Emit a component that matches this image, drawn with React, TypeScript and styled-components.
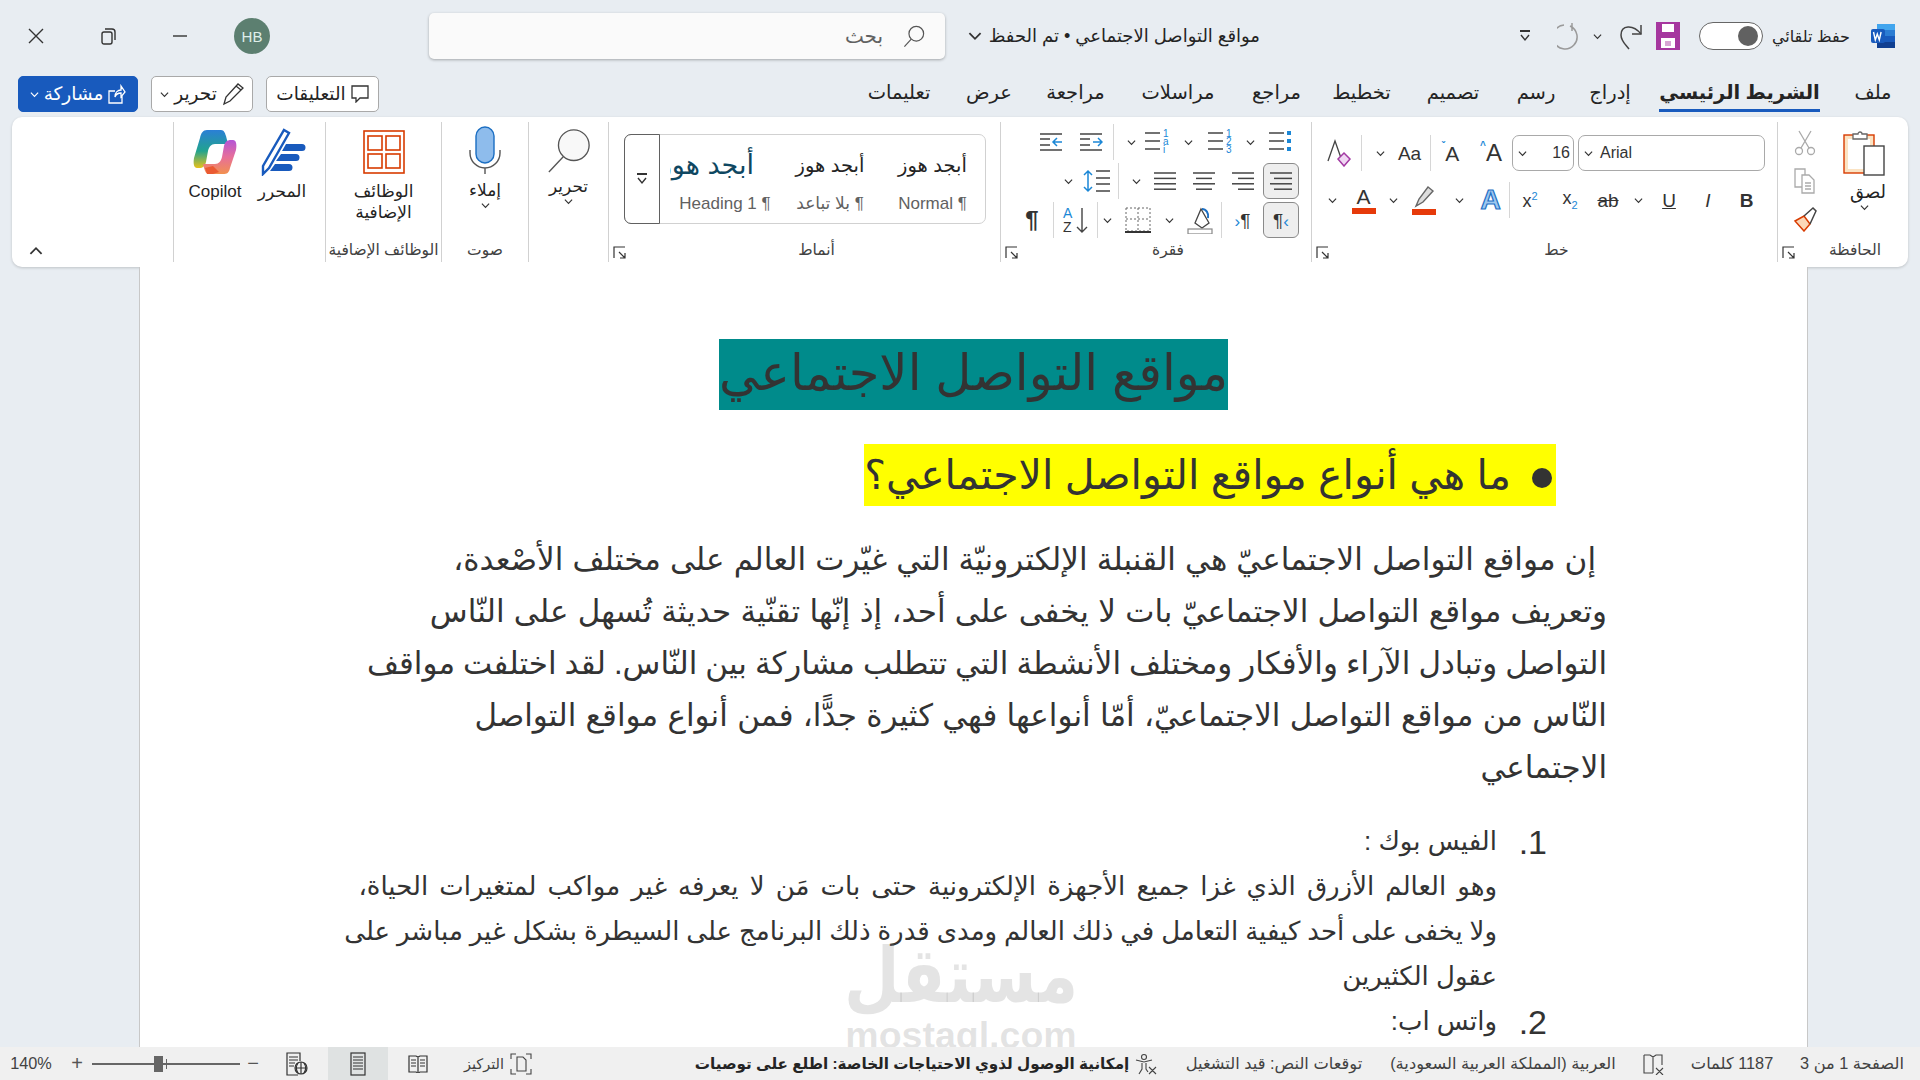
import React from 'react';
import styled, { createGlobalStyle } from 'styled-components';

const GlobalStyle = createGlobalStyle`
  html, body { margin: 0; height: 100%; overflow: hidden; background: #e8edf2; }
  body { font-family: "Liberation Sans", "DejaVu Sans", sans-serif; color: #242424; }
  button { font: inherit; color: inherit; padding: 0; border: 0; background: none; }
  svg { display: block; direction: ltr; }
`;

const Root = styled.div`
  width: 1920px;
  height: 1080px;
  display: flex;
  flex-direction: column;
  background: #e8edf2;
  overflow: hidden;
`;

const TitleBar = styled.div`
  height: 72px;
  flex: none;
  display: flex;
  align-items: center;
  padding-right: 24px;
`;

const Slot = styled.div<{ $w: number; $mr?: number }>`
  width: ${(p) => p.$w}px;
  margin-right: ${(p) => p.$mr || 0}px;
  flex: none;
  display: flex;
  align-items: center;
  justify-content: center;
`;

const AutoSaveLabel = styled(Slot)`
  justify-content: flex-start;
  padding-right: 20px;
  box-sizing: border-box;
  font-size: 16px;
  white-space: nowrap;
`;

const Toggle = styled.div`
  width: 64px;
  height: 28px;
  box-sizing: border-box;
  flex: none;
  border: 1px solid #666;
  border-radius: 14px;
  background: #fff;
  display: flex;
  align-items: center;
  justify-content: flex-start;
  padding: 0 4px;
`;

const ToggleKnob = styled.div`
  width: 20px;
  height: 20px;
  border-radius: 50%;
  background: #616161;
`;

const DocTitle = styled.div`
  width: 300px;
  margin-right: 240px;
  flex: none;
  display: flex;
  align-items: center;
  gap: 7px;
  font-size: 18px;
  white-space: nowrap;
`;

const SearchBox = styled.div`
  width: 516px;
  height: 46px;
  margin-right: 15px;
  flex: none;
  box-sizing: border-box;
  display: flex;
  align-items: center;
  gap: 20px;
  padding-right: 20px;
  background: #fafafa;
  border-radius: 5px;
  box-shadow: 0 1px 3px rgba(0, 0, 0, 0.3);
  font-size: 20px;
  color: #616161;
`;

const Avatar = styled.div`
  width: 36px;
  height: 36px;
  margin-right: 159px;
  flex: none;
  border-radius: 50%;
  background: #5c7f70;
  color: #dfeeea;
  font-size: 15px;
  display: flex;
  align-items: center;
  justify-content: center;
`;

const WindowControls = styled.div`
  margin-right: 18px;
  display: flex;
`;

const WindowButton = styled.button`
  width: 72px;
  height: 72px;
  display: flex;
  align-items: center;
  justify-content: center;
`;

const TabsRow = styled.div`
  height: 36px;
  margin-top: 4px;
  flex: none;
  display: flex;
  align-items: center;
  padding: 0 30px 0 18px;
`;

const Tab = styled.div<{ $w: number; $active?: boolean }>`
  width: ${(p) => p.$w}px;
  height: 36px;
  flex: none;
  box-sizing: border-box;
  display: flex;
  align-items: center;
  justify-content: center;
  white-space: nowrap;
  font-size: 19.5px;
  font-weight: ${(p) => (p.$active ? 700 : 400)};
  border-bottom: 3px solid ${(p) => (p.$active ? '#185abd' : 'transparent')};
`;

const TabGap = styled.div<{ $w: number }>`
  width: ${(p) => p.$w}px;
  flex: none;
`;

const TabActions = styled.div`
  margin-right: auto;
  display: flex;
  gap: 13px;
`;

const ActionButton = styled.button<{ $w: number; $primary?: boolean }>`
  width: ${(p) => p.$w}px;
  height: 36px;
  box-sizing: border-box;
  display: flex;
  align-items: center;
  justify-content: center;
  gap: 5px;
  border-radius: 5px;
  font-size: 18.5px;
  white-space: nowrap;
  background: ${(p) => (p.$primary ? '#185abd' : '#fff')};
  color: ${(p) => (p.$primary ? '#fff' : '#242424')};
  border: 1px solid ${(p) => (p.$primary ? '#185abd' : '#a9a9a9')};
`;

const Ribbon = styled.div`
  height: 150px;
  margin: 5px 12px 0;
  flex: none;
  display: flex;
  background: #fff;
  border-radius: 10px;
  box-shadow: 0 1px 3px rgba(0, 0, 0, 0.18);
  position: relative;
`;

const Group = styled.div<{ $w: number; $last?: boolean }>`
  width: ${(p) => p.$w}px;
  flex: none;
  box-sizing: border-box;
  margin: 5px 0;
  position: relative;
  border-left: ${(p) => (p.$last ? 'none' : '1px solid #d1d1d1')};
  display: flex;
  flex-direction: column;
`;

const GroupBody = styled.div`
  flex: 1;
  display: flex;
  min-height: 0;
`;

const GroupLabel = styled.div<{ $launcher?: boolean }>`
  height: 22px;
  margin-bottom: 1px;
  padding-left: ${(p) => (p.$launcher ? 24 : 0)}px;
  flex: none;
  text-align: center;
  font-size: 15.5px;
  line-height: 22px;
  color: #424242;
  white-space: nowrap;
`;

const Launcher = styled.div`
  position: absolute;
  left: 4px;
  bottom: 3px;
`;

const LargeTool = styled.div<{ $w: number; $top?: number }>`
  width: ${(p) => p.$w}px;
  flex: none;
  display: flex;
  flex-direction: column;
  align-items: center;
  padding-top: ${(p) => p.$top ?? 6}px;
  font-size: 17px;
  line-height: 21px;
  text-align: center;
  white-space: nowrap;
`;

const LargeLabel = styled.div<{ $mt?: number }>`
  margin-top: ${(p) => p.$mt ?? 6}px;
`;

const PasteLabel = styled(LargeLabel)`
  margin-left: 8px;
  font-size: 18px;
`;

const SmallColumn = styled.div`
  width: 30px;
  flex: none;
  display: flex;
  flex-direction: column;
  align-items: center;
  gap: 12px;
  padding-top: 8px;
`;

const ToolRows = styled.div<{ $gap: number; $top: number; $pr: number }>`
  display: flex;
  flex-direction: column;
  gap: ${(p) => p.$gap}px;
  padding: ${(p) => p.$top}px ${(p) => p.$pr}px 0 0;
`;

const ToolRow = styled.div<{ $h: number }>`
  height: ${(p) => p.$h}px;
  display: flex;
  align-items: center;
`;

const Tool = styled.button<{ $w: number; $selected?: boolean }>`
  width: ${(p) => p.$w}px;
  height: 36px;
  flex: none;
  box-sizing: border-box;
  display: flex;
  align-items: center;
  justify-content: center;
  border-radius: 6px;
  background: ${(p) => (p.$selected ? '#eeeeee' : 'transparent')};
  border: 1px solid ${(p) => (p.$selected ? '#8a8a8a' : 'transparent')};
`;

const ToolDivider = styled.div<{ $before?: number }>`
  width: 1px;
  height: 36px;
  margin-right: ${(p) => p.$before || 0}px;
  flex: none;
  background: #d6d6d6;
`;

const FieldBox = styled.div<{ $w: number; $mr?: number; $apart?: boolean }>`
  width: ${(p) => p.$w}px;
  height: 36px;
  margin-left: ${(p) => p.$mr || 0}px;
  flex: none;
  box-sizing: border-box;
  border: 1px solid #a9a9a9;
  border-radius: 7px;
  display: flex;
  align-items: center;
  justify-content: ${(p) => (p.$apart ? 'space-between' : 'flex-start')};
  gap: 7px;
  padding: 0 3px 0 5px;
  font-size: 16px;
`;

const Gallery = styled.div`
  width: 362px;
  height: 90px;
  margin: 12px 14px 0 0;
  flex: none;
  box-sizing: border-box;
  display: flex;
  border: 1px solid #d1d1d1;
  border-radius: 7px;
`;

const StyleItem = styled.div<{ $w: number }>`
  width: ${(p) => p.$w}px;
  flex: none;
  display: flex;
  flex-direction: column;
  align-items: center;
  white-space: nowrap;
`;

const StylePreview = styled.div`
  height: 46px;
  margin-top: 7px;
  font-size: 19.5px;
  line-height: 46px;
  color: #242424;
`;

const HeadingPreview = styled(StylePreview)`
  width: 100%;
  padding-right: 26px;
  box-sizing: border-box;
  overflow: hidden;
  font-size: 27px;
  color: #0f4761;
`;

const StyleName = styled.div`
  margin-top: 4px;
  font-size: 17px;
  color: #616161;
  line-height: 24px;
`;

const GalleryScroll = styled.div`
  width: 36px;
  flex: none;
  box-sizing: border-box;
  border: 1px solid #616161;
  border-top-left-radius: 7px;
  border-bottom-left-radius: 7px;
  margin: -1px auto -1px -1px;
  display: flex;
  align-items: center;
  justify-content: center;
`;

const Collapse = styled.button`
  position: absolute;
  left: 14px;
  bottom: 6px;
  width: 20px;
  height: 20px;
  display: flex;
  align-items: center;
  justify-content: center;
`;

const DocArea = styled.div`
  flex: 1;
  min-height: 0;
  display: flex;
  justify-content: center;
  margin-right: 112px;
  margin-left: 139px;
`;

const Page = styled.div`
  flex: 1;
  position: relative;
  overflow: hidden;
  background: #fff;
  border-left: 1px solid #c8c8c8;
  border-right: 1px solid #c8c8c8;
  color: #333;
  padding-top: 72px;
`;

const TitleBlock = styled.div`
  display: flex;
  justify-content: center;
`;

const TitleText = styled.span`
  height: 71px;
  line-height: 68px;
  background: #008b8b;
  font-size: 49.6px;
  white-space: nowrap;
`;

const HeadingRow = styled.div`
  margin-top: 34px;
  margin-right: 251px;
  display: flex;
  justify-content: flex-start;
`;

const HeadingMark = styled.span`
  height: 62px;
  line-height: 58px;
  background: #ff0;
  font-size: 41px;
  white-space: nowrap;
  display: flex;
  align-items: center;
  gap: 21px;
  padding-right: 4px;
`;

const Bullet = styled.span`
  width: 20px;
  height: 20px;
  border-radius: 50%;
  background: #333;
  flex: none;
  margin-top: 6px;
`;

const Paragraph = styled.div`
  margin-top: 28px;
  margin-right: 200px;
  font-size: 31px;
  line-height: 52px;
  white-space: nowrap;
`;

const ParaLine = styled.div<{ $indent?: number; $spread?: number }>`
  height: 52px;
  padding-right: ${(p) => p.$indent || 0}px;
  word-spacing: ${(p) => p.$spread || 0}px;
`;

const ListBlock = styled.div`
  margin-top: 25px;
`;

const ListItem = styled.div<{ $spread?: number }>`
  margin-right: 310px;
  position: relative;
  font-size: 26px;
  line-height: 45px;
  white-space: nowrap;
  word-spacing: ${(p) => p.$spread || 0}px;
`;

const ListNumber = styled.span`
  position: absolute;
  right: -50px;
  top: 1px;
  font-size: 34px;
  direction: ltr;
`;

const Watermark = styled.div`
  position: absolute;
  left: 671px;
  bottom: -7px;
  width: 300px;
  text-align: center;
  color: rgba(130, 130, 130, 0.22);
  font-weight: 700;
  pointer-events: none;
  white-space: nowrap;
`;

const WatermarkAr = styled.div`
  font-size: 64px;
  line-height: 80px;
  transform: scaleY(1.2);
`;

const WatermarkEn = styled.div`
  font-size: 37.5px;
  line-height: 38px;
`;

const StatusBar = styled.div`
  height: 33px;
  flex: none;
  display: flex;
  align-items: stretch;
  background: #f0f0f0;
  font-size: 16.3px;
  color: #424242;
  white-space: nowrap;
`;

const StatusItem = styled.div<{ $w: number; $bold?: boolean }>`
  width: ${(p) => p.$w}px;
  flex: none;
  display: flex;
  align-items: center;
  justify-content: center;
  gap: 6px;
  font-weight: ${(p) => (p.$bold ? 700 : 400)};
  font-size: ${(p) => (p.$bold ? '15.2px' : 'inherit')};
  color: ${(p) => (p.$bold ? '#242424' : 'inherit')};
`;

const FocusItem = styled(StatusItem)`
  box-sizing: border-box;
  padding-left: 10px;
  font-size: 14.5px;
`;

const ViewButton = styled.div<{ $w: number; $selected?: boolean }>`
  width: ${(p) => p.$w}px;
  flex: none;
  display: flex;
  align-items: center;
  justify-content: center;
  background: ${(p) => (p.$selected ? '#dfe2e2' : 'transparent')};
`;

const StatusLeft = styled.div`
  margin-right: auto;
  display: flex;
  align-items: stretch;
`;

const ZoomTrack = styled.div`
  width: 148px;
  height: 2px;
  align-self: center;
  flex: none;
  background: #666;
  position: relative;
`;

const ZoomThumb = styled.div`
  position: absolute;
  left: 62px;
  top: -7px;
  width: 9px;
  height: 16px;
  background: #666;
`;

const ZoomTick = styled.div`
  position: absolute;
  left: 74px;
  top: -4px;
  width: 1px;
  height: 10px;
  background: #666;
`;

const ZoomSign = styled.div<{ $w: number }>`
  width: ${(p) => p.$w}px;
  flex: none;
  display: flex;
  align-items: center;
  justify-content: center;
  font-size: 20px;
  color: #555;
`;

const ZoomValue = styled.div`
  width: 62px;
  flex: none;
  display: flex;
  align-items: center;
  justify-content: center;
  direction: ltr;
`;

type IconProps = { w: number; h?: number; vb?: string; children: React.ReactNode };

const Icon = ({ w, h, vb, children }: IconProps) => (
  <svg width={w} height={h ?? w} viewBox={vb ?? `0 0 ${w} ${h ?? w}`} fill="none" stroke="#444" strokeWidth={1.2}>
    {children}
  </svg>
);

const Chev = ({ size = 9, up }: { size?: number; up?: boolean }) => (
  <svg width={size} height={size} viewBox="0 0 10 10" fill="none" stroke="#333" strokeWidth={1.3}>
    <path d={up ? 'M1 7l4-4 4 4' : 'M1 3l4 4 4-4'} />
  </svg>
);

const LauncherIcon = () => (
  <Launcher>
    <svg width={13} height={13} viewBox="0 0 13 13" fill="none" stroke="#333" strokeWidth={1.2}>
      <path d="M1 12V1h11M6 6l6 6M12 7v5H7" />
    </svg>
  </Launcher>
);

const AlignIcon = ({ rows }: { rows: number[][] }) => (
  <Icon w={24}>
    {rows.map((r, i) => (
      <path key={i} d={`M${r[0]} ${4 + i * 5.4}H${r[1]}`} strokeWidth={1.5} />
    ))}
  </Icon>
);

const ListIcon = ({ marks }: { marks: React.ReactNode }) => (
  <svg width={26} height={26} viewBox="0 0 26 26" fill="none" stroke="#444" strokeWidth={1.4}>
    <path d="M1 4h15M1 12h15M1 20h15" />
    {marks}
  </svg>
);

const NumMark = ({ y, t }: { y: number; t: string }) => (
  <text x={19} y={y} fontSize={10} fill="#1b87d6" stroke="none" fontFamily="Liberation Sans">
    {t}
  </text>
);

const IndentIcon = ({ flip }: { flip?: boolean }) => (
  <Icon w={24}>
    <path d="M1 4h22M1 20h22M1 9h10M1 15h10" strokeWidth={1.4} />
    <path d={flip ? 'M23 12H14M18 8l-4 4 4 4' : 'M14 12h9M19 8l4 4-4 4'} stroke="#1b87d6" strokeWidth={1.5} />
  </Icon>
);

const Letter = styled.span<{ $size?: number; $color?: string; $bold?: boolean; $italic?: boolean; $u?: boolean; $s?: boolean }>`
  font-size: ${(p) => p.$size ?? 19}px;
  color: ${(p) => p.$color ?? '#333'};
  font-weight: ${(p) => (p.$bold ? 700 : 400)};
  font-style: ${(p) => (p.$italic ? 'italic' : 'normal')};
  text-decoration: ${(p) => (p.$u ? 'underline' : p.$s ? 'line-through' : 'none')};
  direction: ltr;
  line-height: 1;
  position: relative;
`;

const OutlineLetter = styled(Letter)`
  -webkit-text-stroke: 1.2px #1e6fc4;
`;

const Caret = styled(Letter)`
  top: -7px;
  font-weight: 700;
`;

const Script = styled.sub<{ $up?: boolean }>`
  font-size: 11px;
  color: #1b87d6;
  vertical-align: ${(p) => (p.$up ? 'super' : 'sub')};
`;

const ColorBar = styled.div<{ $c: string }>`
  width: 24px;
  height: 6px;
  background: ${(p) => p.$c};
  margin-top: 1px;
`;

const Stack = styled.div`
  display: flex;
  flex-direction: column;
  align-items: center;
`;

const WordLogo = () => (
  <svg width={26} height={26} viewBox="0 0 26 26">
    <rect x={7} y={1} width={18} height={24} rx={2} fill="#2b7cd3" />
    <rect x={7} y={1} width={18} height={6} fill="#41a5ee" />
    <rect x={7} y={13} width={18} height={6} fill="#185abd" />
    <rect x={7} y={19} width={18} height={6} fill="#103f91" />
    <rect x={1} y={6} width={14} height={14} rx={2} fill="#185abd" />
    <path d="M3.5 9l1.8 8 2-6 2 6 1.8-8" fill="none" stroke="#fff" strokeWidth={1.4} />
  </svg>
);

const PasteIcon = () => (
  <svg width={44} height={46} viewBox="0 0 44 46" fill="none">
    <rect x={2} y={5} width={30} height={38} fill="#fbe3c3" stroke="#d83b01" strokeWidth={1.4} />
    <rect x={6} y={9} width={22} height={30} fill="#fff" />
    <path d="M11 7V4h5a2 2 0 014 0h5v5H11z" fill="#fff" stroke="#666" strokeWidth={1.3} />
    <rect x={22} y={16} width={20} height={29} fill="#fff" stroke="#444" strokeWidth={1.4} />
  </svg>
);

const CopilotIcon = () => (
  <svg width={48} height={48} viewBox="0 0 48 48">
    <defs>
      <linearGradient id="cpA" x1="0" y1="0" x2="0" y2="1">
        <stop offset="0" stopColor="#2b7fd6" />
        <stop offset="0.55" stopColor="#21a38f" />
        <stop offset="1" stopColor="#e8c21a" />
      </linearGradient>
      <linearGradient id="cpB" x1="0" y1="0" x2="0" y2="1">
        <stop offset="0" stopColor="#b455d6" />
        <stop offset="0.5" stopColor="#e76f9a" />
        <stop offset="1" stopColor="#f2904f" />
      </linearGradient>
    </defs>
    <path d="M16 2h14c3 0 4 3 5 6l2 8H24c-4 0-6 3-7 7l-2 11c-1 4-3 6-7 6H6C3 40 2 36 3 30l6-20c1-5 3-8 7-8z" fill="url(#cpA)" />
    <path d="M32 46H18c-3 0-4-3-5-6l-1-4h12c4 0 6-3 7-7l2-11c1-4 3-6 7-6h2c3 0 4 4 3 10l-6 18c-1 5-3 6-7 6z" fill="url(#cpB)" />
    <path d="M14 40l8-2 6 6-6 2h-6z" fill="#ea5a32" />
  </svg>
);

const EditorIcon = () => (
  <svg width={48} height={48} viewBox="0 0 48 48" fill="none">
    <path d="M26 2l5 3L11 40l-6 6 0-8z" fill="#fff" stroke="#185abd" strokeWidth={2.4} />
    <path d="M28 16h16a3 3 0 010 7H24zM23 26h15a3 3 0 010 7H18zM17 36h14a3 3 0 010 7H12z" fill="#185abd" />
  </svg>
);

const AddinsIcon = () => (
  <svg width={42} height={44} viewBox="0 0 42 44" fill="none" stroke="#d83b01" strokeWidth={1.6}>
    <rect x={1} y={1} width={40} height={42} />
    <rect x={5} y={6} width={14} height={14} />
    <rect x={23} y={6} width={14} height={14} />
    <rect x={5} y={24} width={14} height={14} />
    <rect x={23} y={24} width={14} height={14} />
  </svg>
);

const MicIcon = () => (
  <svg width={32} height={48} viewBox="0 0 32 48" fill="none">
    <rect x={7} y={1} width={18} height={36} rx={9} fill="#8ebcec" stroke="#1b6ec2" strokeWidth={1.4} />
    <path d="M1 24v3a15 15 0 0030 0v-3M16 42v7" stroke="#555" strokeWidth={1.4} />
  </svg>
);

const SearchGlyph = ({ size }: { size: number }) => (
  <svg width={size} height={size} viewBox="0 0 48 48" fill="none" stroke="#555" strokeWidth={size > 30 ? 1.4 : 2.6}>
    <circle cx={29} cy={19} r={16} fill={size > 30 ? '#f8f8f8' : 'none'} />
    <path d="M18 31L3 47" />
  </svg>
);

export default function App() {
  return (
    <Root dir="rtl">
      <GlobalStyle />
      <TitleBar>
        <WordLogo />
        <AutoSaveLabel $w={107}>حفظ تلقائي</AutoSaveLabel>
        <Toggle>
          <ToggleKnob />
        </Toggle>
        <Slot $w={24} $mr={19}>
          <svg width={24} height={28} viewBox="0 0 24 28">
            <rect x={0} y={0} width={24} height={28} fill="#a6379f" />
            <rect x={6} y={2} width={12} height={8} fill="#fff" />
            <rect x={5} y={16} width={14} height={10} fill="#fff" />
            <rect x={9} y={19} width={6} height={5} fill="#d8a6d4" />
          </svg>
        </Slot>
        <Slot $w={51}>
          <svg width={24} height={30} viewBox="0 0 24 30" fill="none" stroke="#444" strokeWidth={1.5}>
            <path d="M22 4v9h-9" />
            <path d="M22 13C14 3 2 4 2 14c0 6 4 9 8 14" />
          </svg>
        </Slot>
        <Slot $w={15}>
          <Chev />
        </Slot>
        <Slot $w={40}>
          <svg width={26} height={30} viewBox="0 0 26 30" fill="none" stroke="#9a9a9a" strokeWidth={1.5}>
            <path d="M15 2v8M7 4a12 12 0 106 1" />
          </svg>
        </Slot>
        <Slot $w={50}>
          <svg width={10} height={12} viewBox="0 0 10 12" fill="none" stroke="#333" strokeWidth={1.4}>
            <path d="M0 1h10" strokeWidth={2} />
            <path d="M1 5l4 5 4-5" />
          </svg>
        </Slot>
        <DocTitle>
          مواقع التواصل الاجتماعي • تم الحفظ
          <Chev size={14} />
        </DocTitle>
        <SearchBox>
          <SearchGlyph size={22} />
          بحث
        </SearchBox>
        <Avatar dir="ltr">HB</Avatar>
        <WindowControls>
          <WindowButton>
            <svg width={14} height={2} viewBox="0 0 14 2" stroke="#333" strokeWidth={1.4}>
              <path d="M0 1h14" />
            </svg>
          </WindowButton>
          <WindowButton>
            <svg width={15} height={17} viewBox="0 0 15 17" fill="none" stroke="#333" strokeWidth={1.4}>
              <rect x={1} y={4} width={10} height={12} rx={2} />
              <path d="M4 1h7a3 3 0 013 3v8" />
            </svg>
          </WindowButton>
          <WindowButton>
            <svg width={16} height={16} viewBox="0 0 16 16" stroke="#333" strokeWidth={1.4}>
              <path d="M1 1l14 14M15 1L1 15" />
            </svg>
          </WindowButton>
        </WindowControls>
      </TitleBar>

      <TabsRow>
        <Tab $w={34}>ملف</Tab>
        <TabGap $w={36} />
        <Tab $w={161} $active>الشريط الرئيسي</Tab>
        <TabGap $w={30} />
        <Tab $w={38}>إدراج</Tab>
        <TabGap $w={35} />
        <Tab $w={40}>رسم</Tab>
        <TabGap $w={37} />
        <Tab $w={52}>تصميم</Tab>
        <TabGap $w={38} />
        <Tab $w={55}>تخطيط</Tab>
        <TabGap $w={33} />
        <Tab $w={49}>مراجع</Tab>
        <TabGap $w={38} />
        <Tab $w={72}>مراسلات</Tab>
        <TabGap $w={38} />
        <Tab $w={57}>مراجعة</Tab>
        <TabGap $w={36} />
        <Tab $w={44}>عرض</Tab>
        <TabGap $w={36} />
        <Tab $w={64}>تعليمات</Tab>
        <TabActions>
          <ActionButton $w={113}>
            <svg width={18} height={18} viewBox="0 0 18 18" fill="none" stroke="#333" strokeWidth={1.3}>
              <path d="M1 1h16v12H9l-4 4v-4H1z" />
            </svg>
            التعليقات
          </ActionButton>
          <ActionButton $w={102}>
            <svg width={22} height={24} viewBox="0 0 22 24" fill="none" stroke="#333" strokeWidth={1.3}>
              <path d="M2 22l2-7L16 2l5 4L8 19zM14 4l5 4" />
            </svg>
            تحرير
            <Chev />
          </ActionButton>
          <ActionButton $w={120} $primary>
            <svg width={18} height={20} viewBox="0 0 18 20" fill="none" stroke="#fff" strokeWidth={1.3}>
              <path d="M14 12v7H1V7h6M7 13c0-5 3-7 6-7V2l4 6-4 5V9c-3 0-5 1-6 4z" />
            </svg>
            مشاركة
            <svg width={9} height={9} viewBox="0 0 10 10" fill="none" stroke="#fff" strokeWidth={1.3}>
              <path d="M1 3l4 4 4-4" />
            </svg>
          </ActionButton>
        </TabActions>
      </TabsRow>

      <Ribbon>
        <Group $w={131}>
          <GroupBody>
            <LargeTool $w={88} $top={8}>
              <PasteIcon />
              <PasteLabel $mt={6}>لصق</PasteLabel>
              <Chev />
            </LargeTool>
            <SmallColumn>
              <svg width={22} height={26} viewBox="0 0 22 26" fill="none" stroke="#aaa" strokeWidth={1.3}>
                <path d="M5 1l10 17M17 1L7 18" />
                <circle cx={5} cy={21} r={3.5} />
                <circle cx={17} cy={21} r={3.5} />
              </svg>
              <svg width={22} height={26} viewBox="0 0 22 26" fill="none" stroke="#aaa" strokeWidth={1.3}>
                <path d="M1 1h10v18H1z" />
                <path d="M8 7h7l5 5v13H8z" fill="#fff" />
                <path d="M11 15h6M11 18h6M11 21h6" />
              </svg>
              <svg width={24} height={26} viewBox="0 0 24 26" fill="none" stroke="#d83b01" strokeWidth={1.5}>
                <path d="M2 15l9-5 6 8-6 7z" fill="#fbd7b8" />
                <path d="M11 10l9-8 3 3-6 13" stroke="#444" />
              </svg>
            </SmallColumn>
          </GroupBody>
          <GroupLabel $launcher>الحافظة</GroupLabel>
          <LauncherIcon />
        </Group>

        <Group $w={466}>
          <GroupBody>
            <ToolRows $gap={9} $top={13} $pr={12}>
              <ToolRow $h={36}>
                <FieldBox $w={187} $mr={4} dir="ltr">
                  <Chev />
                  <Letter $size={16}>Arial</Letter>
                </FieldBox>
                <FieldBox $w={62} dir="ltr" $apart>
                  <Chev />
                  <Letter $size={16}>16</Letter>
                </FieldBox>
                <Tool $w={42}>
                  <Letter $size={24}>A</Letter>
                  <Caret $size={10} $color="#1b87d6">^</Caret>
                </Tool>
                <Tool $w={39}>
                  <Letter $size={21}>A</Letter>
                  <Caret $size={10} $color="#1b87d6">ˇ</Caret>
                </Tool>
                <ToolDivider />
                <Tool $w={41}>
                  <Letter $size={19}>Aa</Letter>
                </Tool>
                <Tool $w={18}>
                  <Chev />
                </Tool>
                <ToolDivider $before={9} />
                <Tool $w={42}>
                  <svg width={26} height={28} viewBox="0 0 26 28" fill="none">
                    <path d="M1 22L8 2l6 17" stroke="#444" strokeWidth={1.3} />
                    <path d="M17 14l6 6-6 7-6-7z" fill="#f0d7f3" stroke="#a33aa3" strokeWidth={1.5} />
                  </svg>
                </Tool>
              </ToolRow>
              <ToolRow $h={40}>
                <Tool $w={37}><Letter $size={19} $bold>B</Letter></Tool>
                <Tool $w={40}><Letter $size={19} $italic>I</Letter></Tool>
                <Tool $w={38}><Letter $size={19} $u>U</Letter></Tool>
                <Tool $w={24}><Chev /></Tool>
                <Tool $w={36}><Letter $size={19} $s>ab</Letter></Tool>
                <Tool $w={40}><Letter $size={18}>x<Script>2</Script></Letter></Tool>
                <Tool $w={40}><Letter $size={18}>x<Script $up>2</Script></Letter></Tool>
                <ToolDivider />
                <Tool $w={37}><OutlineLetter $size={28} $bold $color="#9dc7ef">A</OutlineLetter></Tool>
                <Tool $w={26}><Chev /></Tool>
                <Tool $w={44}>
                  <Stack>
                    <svg width={24} height={22} viewBox="0 0 24 22" fill="none" stroke="#666" strokeWidth={1.4}>
                      <path d="M4 20l3-7L16 1l5 4-10 11z" fill="#ddd" />
                    </svg>
                    <ColorBar $c="#e63a0a" />
                  </Stack>
                </Tool>
                <Tool $w={18}><Chev /></Tool>
                <Tool $w={41}>
                  <Stack>
                    <Letter $size={21}>A</Letter>
                    <ColorBar $c="#e63a0a" />
                  </Stack>
                </Tool>
                <Tool $w={21}><Chev /></Tool>
              </ToolRow>
            </ToolRows>
          </GroupBody>
          <GroupLabel $launcher>خط</GroupLabel>
          <LauncherIcon />
        </Group>

        <Group $w={311}>
          <GroupBody>
            <ToolRows $gap={3} $top={2} $pr={12}>
              <ToolRow $h={36}>
                <Tool $w={36}>
                  <ListIcon marks={<path d="M21 2v4M21 10v4M21 18v4" stroke="#1b87d6" strokeWidth={4} />} />
                </Tool>
                <Tool $w={26}><Chev /></Tool>
                <Tool $w={34}>
                  <ListIcon marks={<><NumMark y={8} t="1" /><NumMark y={16} t="2" /><NumMark y={24} t="3" /></>} />
                </Tool>
                <Tool $w={30}><Chev /></Tool>
                <Tool $w={32}>
                  <ListIcon marks={<><NumMark y={8} t="1" /><NumMark y={16} t="a" /><NumMark y={24} t="i" /></>} />
                </Tool>
                <Tool $w={20}><Chev /></Tool>
                <ToolDivider $before={7} />
                <Tool $w={44}><IndentIcon /></Tool>
                <Tool $w={36}><IndentIcon flip /></Tool>
              </ToolRow>
              <ToolRow $h={36}>
                <Tool $w={36} $selected>
                  <AlignIcon rows={[[1, 23], [5, 23], [1, 23], [5, 23]]} />
                </Tool>
                <Tool $w={40}>
                  <AlignIcon rows={[[1, 23], [7, 23], [1, 23], [7, 23]]} />
                </Tool>
                <Tool $w={39}>
                  <AlignIcon rows={[[1, 23], [4, 20], [1, 23], [4, 20]]} />
                </Tool>
                <Tool $w={38}>
                  <AlignIcon rows={[[1, 23], [1, 23], [1, 23], [1, 23]]} />
                </Tool>
                <Tool $w={20}><Chev /></Tool>
                <ToolDivider $before={7} />
                <Tool $w={42}>
                  <svg width={28} height={26} viewBox="0 0 28 26" fill="none">
                    <path d="M13 3h14M13 10h14M13 16h14M13 23h14" stroke="#444" strokeWidth={1.4} />
                    <path d="M5 3v20M1 7l4-4 4 4M1 19l4 4 4-4" stroke="#1b87d6" strokeWidth={1.5} />
                  </svg>
                </Tool>
                <Tool $w={16}><Chev /></Tool>
              </ToolRow>
              <ToolRow $h={36}>
                <Tool $w={36} $selected>
                  <Letter $size={19}>¶<Letter $size={17} $color="#1b87d6">‹</Letter></Letter>
                </Tool>
                <Tool $w={41}>
                  <Letter $size={19}><Letter $size={17} $color="#1b87d6">›</Letter>¶</Letter>
                </Tool>
                <ToolDivider />
                <Tool $w={42}>
                  <svg width={26} height={28} viewBox="0 0 26 28" fill="none">
                    <path d="M8 17L14 3l8 14-7 5z" stroke="#444" strokeWidth={1.3} />
                    <path d="M15 3c4 0 7 4 6 9" stroke="#1b6ec2" strokeWidth={2} />
                    <rect x={1} y={23} width={24} height={5} stroke="#888" strokeWidth={1.2} />
                  </svg>
                </Tool>
                <Tool $w={20}><Chev /></Tool>
                <Tool $w={42}>
                  <svg width={26} height={26} viewBox="0 0 26 26" fill="none" stroke="#666" strokeWidth={1}>
                    <rect x={1} y={1} width={24} height={23} strokeDasharray="2 2" />
                    <path d="M13 1v23M1 12h24" strokeDasharray="2 2" />
                    <path d="M0 25h26" stroke="#333" strokeWidth={2} />
                  </svg>
                </Tool>
                <Tool $w={19}><Chev /></Tool>
                <ToolDivider />
                <Tool $w={43}>
                  <svg width={28} height={28} viewBox="0 0 28 28" fill="none">
                    <path d="M20 2v24M15 21l5 5 5-5" stroke="#444" strokeWidth={1.4} />
                    <text x={1} y={12} fontSize={14} fill="#1b87d6" stroke="none" fontFamily="Liberation Sans">A</text>
                    <text x={1} y={26} fontSize={14} fill="#333" stroke="none" fontFamily="Liberation Sans">Z</text>
                  </svg>
                </Tool>
                <ToolDivider />
                <Tool $w={42}>
                  <Letter $size={24} $bold>¶</Letter>
                </Tool>
              </ToolRow>
            </ToolRows>
          </GroupBody>
          <GroupLabel $launcher>فقرة</GroupLabel>
          <LauncherIcon />
        </Group>

        <Group $w={392}>
          <GroupBody>
            <Gallery>
              <StyleItem $w={105}>
                <StylePreview>أبجد هوز</StylePreview>
                <StyleName>¶ Normal</StyleName>
              </StyleItem>
              <StyleItem $w={100}>
                <StylePreview>أبجد هوز</StylePreview>
                <StyleName>¶ بلا تباعد</StyleName>
              </StyleItem>
              <StyleItem $w={110}>
                <HeadingPreview>أبجد هوز</HeadingPreview>
                <StyleName>¶ Heading 1</StyleName>
              </StyleItem>
              <GalleryScroll>
                <svg width={10} height={12} viewBox="0 0 10 12" fill="none" stroke="#333" strokeWidth={1.4}>
                  <path d="M0 1h10" strokeWidth={2} />
                  <path d="M1 5l4 5 4-5" />
                </svg>
              </GalleryScroll>
            </Gallery>
          </GroupBody>
          <GroupLabel $launcher>أنماط</GroupLabel>
          <LauncherIcon />
        </Group>

        <Group $w={80}>
          <GroupBody>
            <LargeTool $w={79} $top={5}>
              <SearchGlyph size={46} />
              <LargeLabel $mt={3}>تحرير</LargeLabel>
              <Chev />
            </LargeTool>
          </GroupBody>
        </Group>

        <Group $w={87}>
          <GroupBody>
            <LargeTool $w={86} $top={4}>
              <MicIcon />
              <LargeLabel $mt={6}>إملاء</LargeLabel>
              <Chev />
            </LargeTool>
          </GroupBody>
          <GroupLabel>صوت</GroupLabel>
        </Group>

        <Group $w={116}>
          <GroupBody>
            <LargeTool $w={115} $top={8}>
              <AddinsIcon />
              <LargeLabel $mt={7}>الوظائف<br />الإضافية</LargeLabel>
            </LargeTool>
          </GroupBody>
          <GroupLabel>الوظائف الإضافية</GroupLabel>
        </Group>

        <Group $w={152}>
          <GroupBody>
            <LargeTool $w={86} $top={6}>
              <EditorIcon />
              <LargeLabel $mt={5}>المحرر</LargeLabel>
            </LargeTool>
            <LargeTool $w={48} $top={6}>
              <CopilotIcon />
              <LargeLabel $mt={5}>Copilot</LargeLabel>
            </LargeTool>
          </GroupBody>
        </Group>
        <Collapse>
          <Chev size={14} up />
        </Collapse>
      </Ribbon>

      <DocArea>
        <Page>
          <TitleBlock>
            <TitleText>مواقع التواصل الاجتماعي</TitleText>
          </TitleBlock>
          <HeadingRow>
            <HeadingMark>
              <Bullet />
              ما هي أنواع مواقع التواصل الاجتماعي؟
            </HeadingMark>
          </HeadingRow>
          <Paragraph>
            <ParaLine $indent={11} $spread={0.5}>إن مواقع التواصل الاجتماعيّ هي القنبلة الإلكترونيّة التي غيّرت العالم على مختلف الأصْعدة،</ParaLine>
            <ParaLine $spread={0.7}>وتعريف مواقع التواصل الاجتماعيّ بات لا يخفى على أحد، إذ إنّها تقنّية حديثة تُسهل على النّاس</ParaLine>
            <ParaLine $spread={-0.6}>التواصل وتبادل الآراء والأفكار ومختلف الأنشطة التي تتطلب مشاركة بين النّاس. لقد اختلفت مواقف</ParaLine>
            <ParaLine $spread={0.7}>النّاس من مواقع التواصل الاجتماعيّ، أمّا أنواعها فهي كثيرة جدًّا، فمن أنواع مواقع التواصل</ParaLine>
            <ParaLine>الاجتماعي</ParaLine>
          </Paragraph>
          <ListBlock>
            <ListItem>
              <ListNumber>.1</ListNumber>
              الفيس بوك :
            </ListItem>
            <ListItem $spread={3.9}>وهو العالم الأزرق الذي غزا جميع الأجهزة الإلكترونية حتى بات مَن لا يعرفه غير مواكب لمتغيرات الحياة،</ListItem>
            <ListItem $spread={-0.3}>ولا يخفى على أحد كيفية التعامل في ذلك العالم ومدى قدرة ذلك البرنامج على السيطرة بشكل غير مباشر على</ListItem>
            <ListItem>عقول الكثيرين</ListItem>
            <ListItem>
              <ListNumber>.2</ListNumber>
              واتس اب:
            </ListItem>
          </ListBlock>
          <Watermark>
            <WatermarkAr>مستقل</WatermarkAr>
            <WatermarkEn dir="ltr">mostaql.com</WatermarkEn>
          </Watermark>
        </Page>
      </DocArea>

      <StatusBar>
        <StatusItem $w={136}>الصفحة 1 من 3</StatusItem>
        <StatusItem $w={104}>1187 كلمات</StatusItem>
        <StatusItem $w={54}>
          <svg width={22} height={22} viewBox="0 0 22 22" fill="none" stroke="#444" strokeWidth={1.1}>
            <path d="M2 2h6l3 2 3-2h6v10M11 4v16M11 20H2V2M14 15l7 7M21 15l-7 7" />
          </svg>
        </StatusItem>
        <StatusItem $w={246}>العربية (المملكة العربية السعودية)</StatusItem>
        <StatusItem $w={212}>توقعات النص: قيد التشغيل</StatusItem>
        <StatusItem $w={484} $bold>
          <svg width={22} height={22} viewBox="0 0 22 22" fill="none" stroke="#444" strokeWidth={1.1}>
            <circle cx={9} cy={4} r={2.5} />
            <path d="M1 7l8 2 8-2M7 10v6l-3 5M11 10v6l2 3M14 14l7 7M21 14l-7 7" />
          </svg>
          إمكانية الوصول لذوي الاحتياجات الخاصة: اطلع على توصيات
        </StatusItem>
        <StatusLeft>
          <FocusItem $w={90}>
            <svg width={22} height={22} viewBox="0 0 22 22" fill="none" stroke="#444" strokeWidth={1.1}>
              <path d="M1 6V1h5M16 1h5v5M21 16v5h-5M6 21H1v-5M7 4h6l3 3v11H7z" />
            </svg>
            التركيز
          </FocusItem>
          <ViewButton $w={60}>
            <svg width={20} height={18} viewBox="0 0 20 18" fill="none" stroke="#333" strokeWidth={1.2}>
              <path d="M1 1h7l2 1 2-1h7v16h-7l-2 1-2-1H1zM10 2v15M3 5h5M3 8h5M3 11h5M12 5h5M12 8h5M12 11h5" />
            </svg>
          </ViewButton>
          <ViewButton $w={60} $selected>
            <svg width={16} height={24} viewBox="0 0 16 24" fill="none" stroke="#333" strokeWidth={1.2}>
              <rect x={1} y={1} width={14} height={22} />
              <path d="M3 5h10M3 8h10M3 11h10M3 14h10M3 17h10" />
            </svg>
          </ViewButton>
          <ViewButton $w={62}>
            <svg width={22} height={24} viewBox="0 0 22 24" fill="none" stroke="#333" strokeWidth={1.2}>
              <path d="M12 23H1V1h13v8M3 5h9M3 8h9M3 11h6M3 14h5" />
              <circle cx={15} cy={16} r={6} />
              <path d="M9 16h12M15 10v12M12 11c-2 3-2 7 0 10M18 11c2 3 2 7 0 10" />
            </svg>
          </ViewButton>
          <ZoomSign $w={26}>−</ZoomSign>
          <ZoomTrack>
            <ZoomThumb />
            <ZoomTick />
          </ZoomTrack>
          <ZoomSign $w={30}>+</ZoomSign>
          <ZoomValue>140%</ZoomValue>
        </StatusLeft>
      </StatusBar>
    </Root>
  );
}
